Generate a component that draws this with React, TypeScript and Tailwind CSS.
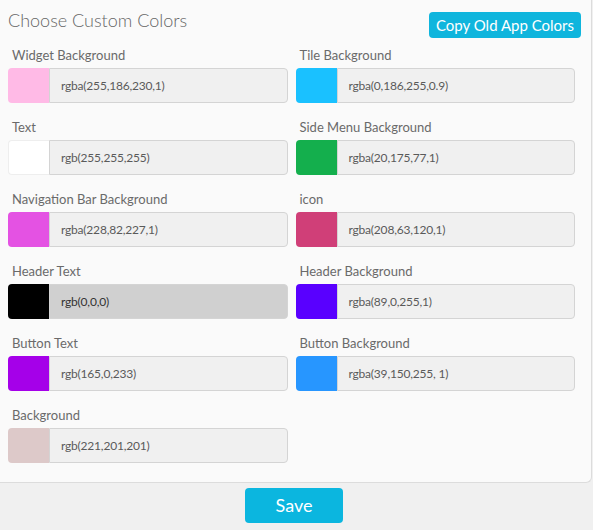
import React from "react";

type Field = { label: string; value: string; color: string; disabled?: boolean; border?: boolean };

const fields: Field[] = [
  { label: "Widget Background", value: "rgba(255,186,230,1)", color: "#ffbae6" },
  { label: "Tile Background", value: "rgba(0,186,255,0.9)", color: "#1ac1ff" },
  { label: "Text", value: "rgb(255,255,255)", color: "#ffffff", border: true },
  { label: "Side Menu Background", value: "rgba(20,175,77,1)", color: "#14af4d" },
  { label: "Navigation Bar Background", value: "rgba(228,82,227,1)", color: "#e452e3" },
  { label: "icon", value: "rgba(208,63,120,1)", color: "#d03f78" },
  { label: "Header Text", value: "rgb(0,0,0)", color: "#000000", disabled: true },
  { label: "Header Background", value: "rgba(89,0,255,1)", color: "#5900ff" },
  { label: "Button Text", value: "rgb(165,0,233)", color: "#a500e9" },
  { label: "Button Background", value: "rgba(39,150,255, 1)", color: "#2796ff" },
  { label: "Background", value: "rgb(221,201,201)", color: "#ddc9c9" },
];

function ColorField({ f }: { f: Field }) {
  return (
    <div className="flex flex-col">
      <div className="text-[13px] leading-[16px] text-[#6a6a6a] pl-1">{f.label}</div>
      <div className="mt-[5px] flex h-[35px]">
        <div
          className={`w-[41px] h-full rounded-l-[4px] ${f.border ? "border border-r-0 border-[#eee]" : ""}`}
          style={{ backgroundColor: f.color }}
        />
        <div
          className={`flex-1 flex items-center pl-[11px] border border-[#d4d4d4] rounded-r-[4px] text-[12px] tracking-[-0.2px] ${
            f.disabled ? "bg-[#d0d0d0] text-[#333]" : "bg-[#f0f0f0] text-[#5a5a5a]"
          }`}
        >
          {f.value}
        </div>
      </div>
    </div>
  );
}

export default function App() {
  return (
    <div
      className="w-[593px] h-[530px] bg-[#f0f0f0] overflow-hidden"
      style={{ fontFamily: "Lato, 'Open Sans', sans-serif" }}
    >
      <div className="w-[592px] h-[483px] bg-[#fafafa] border-r border-b border-[#dcdcdc] rounded-br-[6px] pl-2 pr-[16px]">
        <div className="flex justify-between items-start pt-[7px] h-[47px]">
          <div className="text-[18px] leading-[26px] font-light text-[#666]">Choose Custom Colors</div>
          <button className="mt-[5px] mr-[-6px] h-[26px] px-[7px] rounded-[4px] bg-[#0fb5dd] text-white text-[15px] leading-[26px]">
            Copy Old App Colors
          </button>
        </div>
        <div className="grid grid-cols-2 gap-x-2 gap-y-4">
          {fields.map((f) => (
            <ColorField key={f.label} f={f} />
          ))}
        </div>
      </div>
      <div className="flex justify-center pt-[5px] pr-[5px]">
        <button className="w-[98px] h-[35px] rounded-[4px] bg-[#0bb6df] text-white text-[18px]">Save</button>
      </div>
    </div>
  );
}
